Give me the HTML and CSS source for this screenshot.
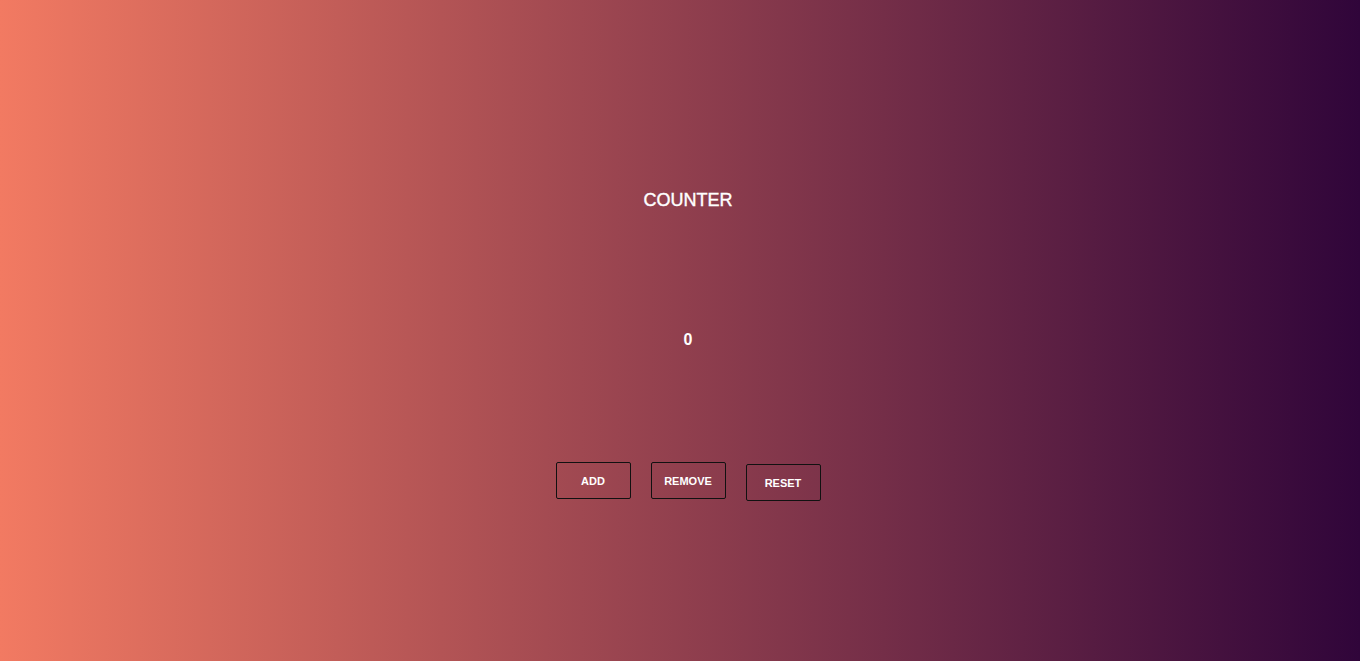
FILE: index.html
```html
<!DOCTYPE html>
<html>
<head>
<meta charset="utf-8">
<link rel="stylesheet" href="styles.css">
</head>
<body>
<main class="app">
  <h1 class="title">COUNTER</h1>
  <div class="count">0</div>
  <div class="actions">
    <button class="btn">ADD</button>
    <button class="btn">REMOVE</button>
    <button class="btn btn-reset">RESET</button>
  </div>
</main>
</body>
</html>
```
FILE: styles.css
```css
html, body {
  margin: 0;
  padding: 0;
  height: 100%;
}
body {
  background: linear-gradient(to right, #f27a62 0%, #30053a 100%);
  font-family: "Liberation Sans", Arial, sans-serif;
  color: #fff;
}
.app {
  box-sizing: border-box;
  height: 661px;
  padding-left: 16px;
  display: flex;
  flex-direction: column;
  align-items: center;
}
.title {
  margin: 189px 0 0;
  font-size: 18px;
  font-weight: normal;
  line-height: 22px;
  -webkit-text-stroke: 0.4px #fff;
}
.count {
  margin-top: 119px;
  font-size: 16px;
  font-weight: bold;
  line-height: 20px;
}
.actions {
  margin-top: 112px;
  display: flex;
  align-items: flex-start;
  gap: 20px;
}
.btn {
  width: 75px;
  height: 37px;
  padding: 0;
  background: transparent;
  border: 1px solid #111;
  border-radius: 2px;
  color: #fff;
  font-family: "Liberation Sans", Arial, sans-serif;
  font-size: 11px;
  font-weight: bold;
}
.btn-reset {
  margin-top: 2px;
}
```
